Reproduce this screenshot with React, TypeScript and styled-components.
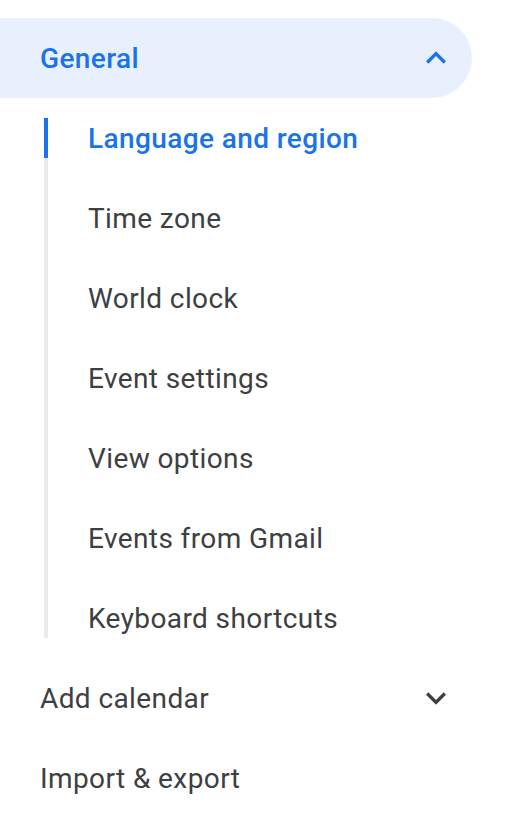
import styled, { createGlobalStyle } from "styled-components";

const GlobalStyle = createGlobalStyle`
  body {
    margin: 0;
    background: #ffffff;
    font-family: Roboto, "Liberation Sans", Arial, sans-serif;
  }
`;

const Nav = styled.nav`
  width: 472px;
  padding-top: 18px;
  display: flex;
  flex-direction: column;
`;

const SectionRow = styled.div<{ $open?: boolean }>`
  height: 80px;
  display: flex;
  align-items: center;
  justify-content: space-between;
  padding: 0 16px 0 40px;
  border-radius: 0 40px 40px 0;
  background: ${(p) => (p.$open ? "#e8f0fe" : "transparent")};
  color: ${(p) => (p.$open ? "#1a73e8" : "#3c4043")};
  font-size: 28px;
  font-weight: ${(p) => (p.$open ? 500 : 400)};
  letter-spacing: 0.4px;
  cursor: pointer;

  svg {
    width: 40px;
    height: 40px;
    fill: currentColor;
  }
`;

const SubWrap = styled.div`
  padding: 20px 0;
`;

const SubList = styled.ul`
  list-style: none;
  margin: 0 0 0 44px;
  padding: 0;
  border-left: 4px solid #e8eaed;
  display: flex;
  flex-direction: column;
  gap: 40px;
`;

const SubItem = styled.li<{ $active?: boolean }>`
  height: 40px;
  margin-left: -4px;
  padding-left: 40px;
  border-left: 4px solid ${(p) => (p.$active ? "#1a73e8" : "transparent")};
  display: flex;
  align-items: center;
  font-size: 28px;
  font-weight: ${(p) => (p.$active ? 500 : 400)};
  letter-spacing: 0.4px;
  color: ${(p) => (p.$active ? "#1a73e8" : "#3c4043")};
  cursor: pointer;
`;

const ExpandLess = () => (
  <svg viewBox="0 0 24 24">
    <path d="M12 8l-6 6 1.41 1.41L12 10.83l4.59 4.58L18 14z" />
  </svg>
);

const ExpandMore = () => (
  <svg viewBox="0 0 24 24">
    <path d="M16.59 8.59L12 13.17 7.41 8.59 6 10l6 6 6-6z" />
  </svg>
);

const generalItems = [
  "Language and region",
  "Time zone",
  "World clock",
  "Event settings",
  "View options",
  "Events from Gmail",
  "Keyboard shortcuts",
];

export default function App() {
  return (
    <>
      <GlobalStyle />
      <Nav>
        <SectionRow $open>
          <span>General</span>
          <ExpandLess />
        </SectionRow>
        <SubWrap>
          <SubList>
            {generalItems.map((label, i) => (
              <SubItem key={label} $active={i === 0}>
                {label}
              </SubItem>
            ))}
          </SubList>
        </SubWrap>
        <SectionRow>
          <span>Add calendar</span>
          <ExpandMore />
        </SectionRow>
        <SectionRow>
          <span>Import &amp; export</span>
        </SectionRow>
      </Nav>
    </>
  );
}
